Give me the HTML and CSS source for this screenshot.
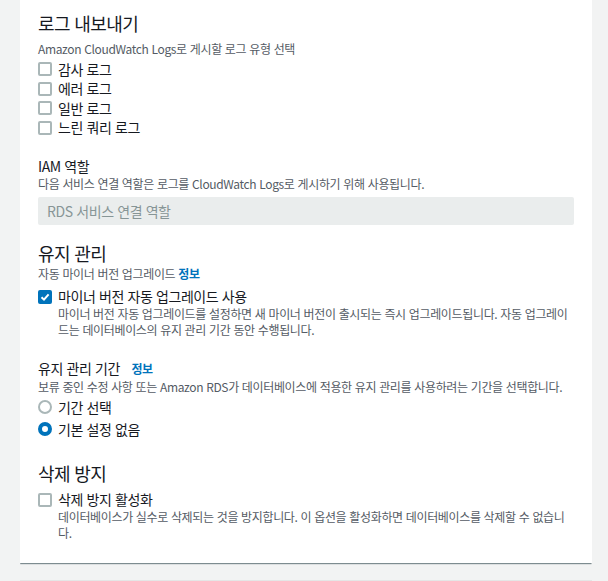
FILE: index.html
```html
<!DOCTYPE html>
<html lang="ko">
<head>
    <meta charset="UTF-8">
    <meta name="viewport" content="width=device-width, initial-scale=1.0">
    <title>추가 구성</title>
    <link rel="stylesheet" href="styles.css">
</head>
<body>
    <div class="panel">
        <h2 class="heading">로그 내보내기</h2>
        <p class="desc">Amazon CloudWatch Logs로 게시할 로그 유형 선택</p>
        <div class="checks">
            <label class="check"><span class="box"></span>감사 로그</label>
            <label class="check"><span class="box"></span>에러 로그</label>
            <label class="check"><span class="box"></span>일반 로그</label>
            <label class="check"><span class="box"></span>느린 쿼리 로그</label>
        </div>

        <div class="field">
            <div class="label">IAM 역할</div>
            <p class="desc">다음 서비스 연결 역할은 로그를 CloudWatch Logs로 게시하기 위해 사용됩니다.</p>
            <div class="input">RDS 서비스 연결 역할</div>
        </div>

        <h2 class="heading tight">유지 관리</h2>
        <p class="desc">자동 마이너 버전 업그레이드 <a class="info">정보</a></p>
        <div class="option">
            <span class="box checked">
                <svg width="10" height="10" viewBox="0 0 10 10"><path d="M1.5 5.2 L4 7.6 L8.6 2.4" fill="none" stroke="#fff" stroke-width="2"/></svg>
            </span>
            <div>
                <div class="opt-title">마이너 버전 자동 업그레이드 사용</div>
                <p class="desc">마이너 버전 자동 업그레이드를 설정하면 새 마이너 버전이 출시되는 즉시 업그레이드됩니다. 자동 업그레이드는 데이터베이스의 유지 관리 기간 동안 수행됩니다.</p>
            </div>
        </div>

        <div class="field window">
            <div class="label">유지 관리 기간 <a class="info">정보</a></div>
            <p class="desc">보류 중인 수정 사항 또는 Amazon RDS가 데이터베이스에 적용한 유지 관리를 사용하려는 기간을 선택합니다.</p>
            <div class="radios">
                <label class="check"><span class="radio"></span>기간 선택</label>
                <label class="check"><span class="radio on"></span>기본 설정 없음</label>
            </div>
        </div>

        <h2 class="heading tight">삭제 방지</h2>
        <div class="option solo">
            <span class="box"></span>
            <div>
                <div class="opt-title">삭제 방지 활성화</div>
                <p class="desc">데이터베이스가 실수로 삭제되는 것을 방지합니다. 이 옵션을 활성화하면 데이터베이스를 삭제할 수 없습니다.</p>
            </div>
        </div>
    </div>
    <div class="panel next"></div>
</body>
</html>
```

FILE: styles.css
```css
* {
    margin: 0;
    padding: 0;
    box-sizing: border-box;
}

body {
    background-color: #f2f3f3;
    font-family: "Noto Sans CJK KR", "Noto Sans", sans-serif;
    color: #16191f;
    letter-spacing: -0.4px;
    width: 572px;
    margin: -20px 0 0 20px;
}

.panel {
    background-color: #fff;
    box-shadow: -1px 1px 1px 0 rgba(0, 28, 36, 0.35), 1px 1px 1px 0 rgba(0, 28, 36, 0.2);
    padding: 32px 18px 22px 18px;
}

.panel.next {
    margin-top: 18px;
    height: 40px;
    padding: 0;
    box-shadow: 0 0 0 1px #e4e6e6;
}

.heading {
    font-size: 18px;
    font-weight: 400;
    line-height: 22px;
    letter-spacing: -0.6px;
    margin-bottom: 7px;
}

.heading.tight {
    margin-top: 3px;
    margin-bottom: 2px;
}

.desc {
    font-size: 12px;
    line-height: 16px;
    letter-spacing: -0.35px;
    color: #545b64;
}

.info {
    color: #0073bb;
    font-weight: 700;
    font-size: 12px;
}

.label .info {
    margin-left: 8px;
}

.checks {
    margin-top: 2.5px;
    display: flex;
    flex-direction: column;
}

.check {
    display: flex;
    align-items: center;
    gap: 6px;
    font-size: 14px;
    line-height: 19.5px;
}

.box {
    width: 14px;
    height: 14px;
    border: 2px solid #aab7b8;
    border-radius: 2px;
    flex-shrink: 0;
    display: flex;
    align-items: center;
    justify-content: center;
}

.box.checked {
    border: none;
    background-color: #0073bb;
}

.field {
    margin-top: 18.5px;
    margin-bottom: 17px;
}

.field.window {
    margin-top: 20px;
    margin-bottom: 23px;
}

.label {
    font-size: 14px;
    line-height: 20px;
}

.input {
    margin-top: 5px;
    background-color: #eaeded;
    border-radius: 2px;
    height: 28px;
    padding: 0 9px;
    font-size: 14px;
    line-height: 28px;
    color: #879596;
}

.option {
    display: flex;
    gap: 6px;
    margin-top: 4.5px;
}

.option.solo {
    margin-top: 6.5px;
}

.option .box {
    margin-top: 3px;
}

.opt-title {
    font-size: 14px;
    line-height: 19px;
}

.radios {
    margin-top: 2px;
    display: flex;
    flex-direction: column;
    gap: 2px;
}

.radios .check {
    line-height: 20px;
}

.radio {
    width: 14px;
    height: 14px;
    border: 2px solid #aab7b8;
    border-radius: 50%;
    flex-shrink: 0;
}

.radio.on {
    border: 4px solid #0073bb;
}
```
